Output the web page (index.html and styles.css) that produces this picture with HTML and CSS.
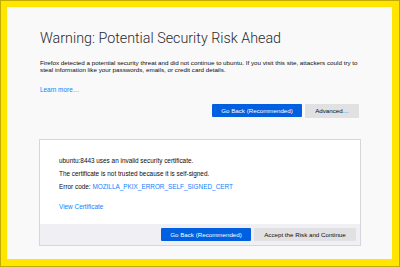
FILE: index.html
```html
<!DOCTYPE html>
<html>
<head>
<meta charset="utf-8">
<link rel="stylesheet" href="styles.css">
</head>
<body>
<div class="frame">
  <div class="page">
    <div class="content">
      <h1 class="title">Warning: Potential Security Risk Ahead</h1>
      <p class="intro">Firefox detected a potential security threat and did not continue to ubuntu. If you visit this site, attackers could try to steal information like your passwords, emails, or credit card details.</p>
      <a class="link learn">Learn more…</a>
      <div class="actions">
        <button class="btn primary">Go Back (Recommended)</button>
        <button class="btn secondary adv">Advanced…</button>
      </div>
      <div class="card">
        <div class="card-body">
          <p class="line">ubuntu:8443 uses an invalid security certificate.</p>
          <p class="line">The certificate is not trusted because it is self-signed.</p>
          <p class="line">Error code: <a class="link">MOZILLA_PKIX_ERROR_SELF_SIGNED_CERT</a></p>
          <p class="line view"><a class="link">View Certificate</a></p>
        </div>
        <div class="card-foot">
          <button class="btn primary">Go Back (Recommended)</button>
          <button class="btn secondary accept">Accept the Risk and Continue</button>
        </div>
      </div>
    </div>
  </div>
</div>
</body>
</html>
```
FILE: styles.css
```css
* { box-sizing: border-box; }
html, body { margin: 0; padding: 0; }
body {
  width: 400px;
  height: 267px;
  overflow: hidden;
  font-family: "Liberation Sans", Arial, sans-serif;
  color: #0c0c0d;
}
.frame {
  width: 400px;
  height: 267px;
  background: #ffe500;
  border: 1px solid #bfae00;
  padding: 6px 7px 7px 6px;
}
.page {
  width: 385px;
  height: 252px;
  background: #f9f9fa;
}
.content {
  padding: 22px 33px 0 33px;
  display: flex;
  flex-direction: column;
}
.title {
  margin: 0;
  font-family: Roboto, "Liberation Sans", sans-serif;
  font-weight: 300;
  font-size: 14.3px;
  line-height: 18px;
  color: #2a2a2e;
}
.intro {
  margin: 12px 0 0 0;
  font-size: 6.25px;
  line-height: 7.4px;
  color: #0c0c0d;
}
.link {
  color: #0a84ff;
  text-decoration: none;
}
.learn {
  margin-top: 12px;
  font-size: 6.4px;
  line-height: 8px;
}
.actions {
  margin-top: 10px;
  display: flex;
  justify-content: flex-end;
  gap: 3px;
}
.btn {
  border: none;
  border-radius: 1px;
  font-family: "Liberation Sans", Arial, sans-serif;
  font-size: 6.2px;
  height: 13px;
  padding: 0;
  margin: 0;
}
.primary {
  background: #0060df;
  color: #fff;
  width: 90px;
}
.secondary {
  background: #e1e1e3;
  color: #0c0c0d;
}
.adv { width: 54px; height: 14px; }
.card {
  margin: 21px -2px 0 -1px;
  width: 322px;
  height: 107px;
  border: 1px solid #d7d7db;
  background: #fff;
  display: flex;
  flex-direction: column;
}
.card-body {
  flex: 1;
  padding: 17px 19px 0 19px;
}
.line {
  margin: 0 0 5.3px 0;
  font-size: 6.4px;
  line-height: 8px;
}
.line.view { margin-top: 12px; }
.card-foot {
  height: 21px;
  background: #f0f0f4;
  display: flex;
  justify-content: flex-end;
  align-items: flex-start;
  padding: 4px 4px 0 0;
  gap: 3px;
}
.accept { width: 102px; }
```
